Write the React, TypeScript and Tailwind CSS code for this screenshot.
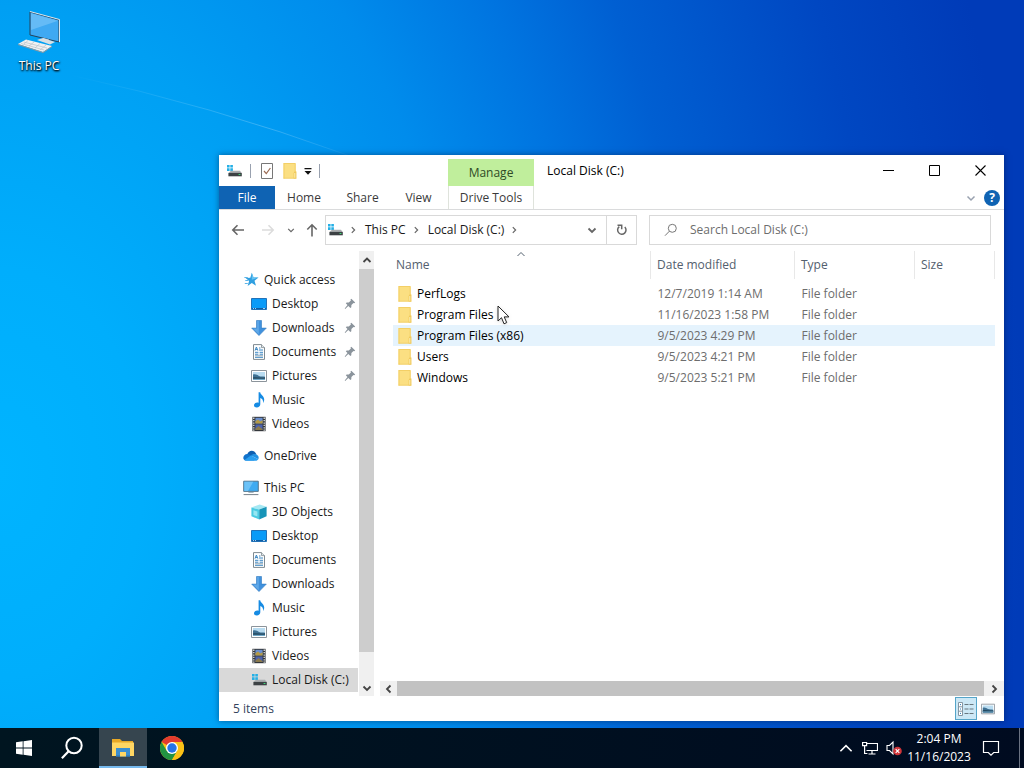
import type { ReactNode } from "react";

type IconProps = { className?: string };

const svgProps = { viewBox: "0 0 16 16", "aria-hidden": true } as const;

function DriveIcon({ className = "size-4" }: IconProps) {
  return (
    <svg {...svgProps} className={className}>
      <path d="M1 2h2.6v2.6H1zM4.3 2h2.6v2.6H4.3zM1 5.3h2.6v2.6H1zM4.3 5.3h2.6v2.6H4.3z" fill="#25b0e6" />
      <path d="M3.5 9 5 7.8h9L15.6 10H2.6z" fill="#a9adb0" />
      <path d="M2.4 9.9h13.4v3.4H2.4z" fill="#3c4144" />
      <path d="M12.6 11h1.8v1h-1.8z" fill="#3ddc78" />
    </svg>
  );
}

function FolderIcon({ className = "size-4" }: IconProps) {
  return (
    <svg {...svgProps} className={className}>
      <path d="M1.500 0h12v8.500h.8V15.500H1.500z" fill="#fbdf82" />
      <path d="M2 .5h11.200V9" fill="none" stroke="#f3cf66" />
      <path d="M2 0v15.500" fill="none" stroke="#f3cf66" />
      <path d="M1.500 14.800h12.800v.7H1.500z" fill="#efc85b" />
      <path d="M11.600 10 12.600 8.500h1.700v7h-2.700z" fill="#efc85b" />
      <path d="M12.300 10h1v4.800h-1z" fill="#fdeeb4" />
    </svg>
  );
}

function StarIcon({ className = "size-4" }: IconProps) {
  return (
    <svg {...svgProps} className={className}>
      <path d="m8.800.8 1.700 4.700 5 .1-4 3.100 1.500 5-4.200-2.800-4.200 3 1.500-5L2.600 6l4.700-.3z" fill="#2f9fe0" />
      <path d="m8.800.8 1.700 4.700 5 .1-6.700 2.200z" fill="#65c3f3" />
      <path d="M1.400 5.500h3.400M2.300 8.500h3M1.800 11.500h3" stroke="#5db4e8" strokeWidth="1" />
    </svg>
  );
}

function DesktopIcon({ className = "size-4" }: IconProps) {
  return (
    <svg {...svgProps} className={className}>
      <path d="M.5 2.500h15v11H.5z" fill="#0a9bf8" stroke="#2272b8" />
      <path d="M1 12.500h14" stroke="#0c5ca3" />
      <path d="M2 12.500h1M4 12.500h1M12 12.500h2" stroke="#d4ecff" strokeWidth=".8" />
    </svg>
  );
}

function DownloadIcon({ className = "size-4" }: IconProps) {
  return (
    <svg {...svgProps} className={className}>
      <path d="M5.5.5h5v7.6h4.8L8 15.6.7 8.1h4.8z" fill="#4091dd" stroke="#2f78c0" strokeWidth=".6" />
      <path d="M6.2 1h1.6v13.2L2.2 8.6h4z" fill="#60a9e9" />
    </svg>
  );
}

function DocumentIcon({ className = "size-4" }: IconProps) {
  return (
    <svg {...svgProps} className={className}>
      <path d="M2.5.6h8l3 3v11.8h-11z" fill="#fff" stroke="#7f8a91" />
      <path d="M10.5.6v3h3" fill="#dfe5e8" stroke="#7f8a91" strokeWidth=".8" />
      <path d="M4 6.6 5.4 3l1.4 3.6M4.5 5.4h1.8M8 4h1.5M8 6h4M4 8.3h3.4M8.6 8.3H12M4 10.2h3.4M8.6 10.2H12M4 13.3h8" stroke="#3b86c2" fill="none" />
      <path d="M4 11.8h8" stroke="#8ca3b2" />
    </svg>
  );
}

function PictureIcon({ className = "size-4" }: IconProps) {
  return (
    <svg {...svgProps} className={className}>
      <path d="M.5 2.5h15v11H.5z" fill="#fff" stroke="#8c949b" />
      <path d="M2 4h12v8H2z" fill="#b9dcf1" />
      <path d="M2 6.6c3-.8 4 .5 6 1.4s4 .2 6 .8V12H2z" fill="#3f7193" />
      <path d="M2 9.4c4-.9 8 .8 12 .2V12H2z" fill="#23485f" />
      <path d="M2 10.8h12V12H2z" fill="#6fa8c8" />
    </svg>
  );
}

function MusicIcon({ className = "size-4" }: IconProps) {
  return (
    <svg {...svgProps} className={className}>
      <path d="M7.6.3h1.6c.3 2.6 4 3.8 4 7.2 0 1.3-.5 2.5-1.2 3.4.4-2.6-.5-4-2.7-4.900v6.300c0 1.900-1.600 3.300-3.500 3.300-1.700 0-2.800-1-2.800-2.300 0-1.600 1.600-2.900 3.200-2.900.5 0 1 .1 1.400.3z" fill="#168be3" />
    </svg>
  );
}

function VideoIcon({ className = "size-4" }: IconProps) {
  return (
    <svg {...svgProps} className={className}>
      <path d="M1.4.8h13.2v14.4H1.4z" fill="#33373b" />
      <path d="M4.4 1.8h7.2v5.6H4.4z" fill="#6a8fd0" />
      <path d="M4.4 8.4h7.2V14H4.4z" fill="#4c62ad" />
      <path d="M4.4 5.3 7 3.4l2.3 2 2.3-1.2v3.2H4.4z" fill="#b59a45" />
      <path d="M4.4 12.6 7.6 10l4 3.2v.8H4.4z" fill="#8b7a4c" />
      <path d="M2.8 1.6v13.2M13.2 1.6v13.2" stroke="#f1f1f1" strokeWidth="1.2" strokeDasharray="1.3 1.1" />
    </svg>
  );
}

function CloudIcon({ className = "size-4" }: IconProps) {
  return (
    <svg {...svgProps} className={className}>
      <path d="M4.3 6.2C5 4 6.7 2.8 8.7 2.8c2.2 0 4 1.5 4.6 3.5L8 9z" fill="#0f5fb0" />
      <path d="M.3 10c0-2.2 1.7-4 4-4 1.4 0 2.4.7 3.6 1.4l3.6 5.2H3.3c-1.7 0-3-1.1-3-2.6z" fill="#1173cc" />
      <path d="M7.8 7.5c1.2-.9 2.4-1.5 3.8-1.4 2.3.1 4.1 1.7 4.1 3.6 0 .6-.2 1.1-.4 1.5z" fill="#2190e2" />
      <path d="m1.4 11.9 6.4-4.4 7.5 3.7c-.5.9-1.4 1.5-2.5 1.5H3.3c-.8 0-1.4-.3-1.9-.8z" fill="#2a9ff0" />
    </svg>
  );
}

function ComputerIcon({ className = "size-4" }: IconProps) {
  return (
    <svg {...svgProps} className={className}>
      <path d="M.7 1.2h14.6v10.2H.7z" fill="#3fabf2" stroke="#4f6d82" strokeWidth=".9" />
      <path d="M1.3 1.8h9L5 10.9H1.3z" fill="#6cc2f7" />
      <path d="M5.4 12h5.2v.9H5.4z" fill="#9fb0bb" />
      <path d="M.6 14.6h14.8" stroke="#75828b" strokeWidth="1" />
    </svg>
  );
}

function CubeIcon({ className = "size-4" }: IconProps) {
  return (
    <svg {...svgProps} className={className}>
      <path d="M.4 3.4 8.6.5l7 2.3-7.4 2.8z" fill="#a6e8f3" />
      <path d="M.4 3.4 8.2 5.6v10L.4 12.2z" fill="#4acbe2" />
      <path d="m8.2 5.6 7.4-2.8v9.4l-7.4 3.4z" fill="#1794b8" />
      <path d="m2.4 6.2 4 1.2v5.2l-4-1.6z" fill="#95e6f2" />
    </svg>
  );
}

function PinIcon() {
  return (
    <svg viewBox="0 0 12 12" aria-hidden className="size-3">
      <path d="M7.3.8 11.2 4.6 10.2 5.3 9.5 5 7.4 7.1 7.3 9.2 6.4 10 4.3 7.9 1.2 10.9.7 10.5 3.5 7.1 1.8 5.3 2.7 4.6 4.8 4.5 6.9 2.5 6.5 1.6z" fill="#8b949c" />
    </svg>
  );
}

type ChevronProps = IconProps & { dir: "up" | "down" | "left" | "right"; weight?: number };

const chevronPaths = {
  up: "M1.5 7 5 3.5 8.5 7",
  down: "M1.5 3.5 5 7l3.5-3.5",
  left: "M6.5 1.5 3 5l3.5 3.5",
  right: "M3.5 1.5 7 5 3.5 8.5",
};

function Chevron({ dir, weight = 1.5, className = "size-2.5" }: ChevronProps) {
  return (
    <svg viewBox="0 0 10 10" aria-hidden className={className}>
      <path d={chevronPaths[dir]} fill="none" stroke="currentColor" strokeWidth={weight} />
    </svg>
  );
}

function ArrowIcon({ path }: { path: string }) {
  return (
    <svg viewBox="0 0 14 14" aria-hidden className="size-3.5">
      <path d={path} fill="none" stroke="currentColor" strokeWidth="1.6" />
    </svg>
  );
}

type NavEntry = { label: string; icon: ReactNode; pinned?: boolean; selected?: boolean };
type NavGroup = { root: NavEntry; children: NavEntry[] };

const navGroups: NavGroup[] = [
  {
    root: { label: "Quick access", icon: <StarIcon /> },
    children: [
      { label: "Desktop", icon: <DesktopIcon />, pinned: true },
      { label: "Downloads", icon: <DownloadIcon />, pinned: true },
      { label: "Documents", icon: <DocumentIcon />, pinned: true },
      { label: "Pictures", icon: <PictureIcon />, pinned: true },
      { label: "Music", icon: <MusicIcon /> },
      { label: "Videos", icon: <VideoIcon /> },
    ],
  },
  { root: { label: "OneDrive", icon: <CloudIcon /> }, children: [] },
  {
    root: { label: "This PC", icon: <ComputerIcon /> },
    children: [
      { label: "3D Objects", icon: <CubeIcon /> },
      { label: "Desktop", icon: <DesktopIcon /> },
      { label: "Documents", icon: <DocumentIcon /> },
      { label: "Downloads", icon: <DownloadIcon /> },
      { label: "Music", icon: <MusicIcon /> },
      { label: "Pictures", icon: <PictureIcon /> },
      { label: "Videos", icon: <VideoIcon /> },
      { label: "Local Disk (C:)", icon: <DriveIcon />, selected: true },
    ],
  },
];

const files = [
  { name: "PerfLogs", modified: "12/7/2019 1:14 AM" },
  { name: "Program Files", modified: "11/16/2023 1:58 PM" },
  { name: "Program Files (x86)", modified: "9/5/2023 4:29 PM", hovered: true },
  { name: "Users", modified: "9/5/2023 4:21 PM" },
  { name: "Windows", modified: "9/5/2023 5:21 PM" },
];

function TitleBar() {
  return (
    <header className="flex h-[31px] shrink-0 pr-px">
      <div className="flex w-[229px] items-center pl-[7px]">
        <DriveIcon />
        <span className="ml-2 h-3.5 w-px bg-gray-400" />
        <button aria-label="Properties" className="ml-2">
          <svg viewBox="0 0 16 16" className="size-4">
            <path d="M2.500.5h11v15h-11z" fill="#fff" stroke="#777" />
            <path d="m5 8 2.300 2.600L11.400 5" fill="none" stroke="#9a6a52" strokeWidth="1.200" />
          </svg>
        </button>
        <button aria-label="New folder" className="ml-1.5">
          <FolderIcon className="h-4 w-[18px]" />
        </button>
        <button aria-label="Customize toolbar" className="ml-1">
          <svg viewBox="0 0 10 10" className="size-2.5">
            <path d="M1.500 2h7v1.200h-7zM1.500 5h7L5 8.800z" fill="#111" />
          </svg>
        </button>
        <span className="ml-1.5 h-3.5 w-px bg-gray-400" />
      </div>
      <div className="mt-1 flex w-[86px] items-center justify-center bg-[#c0ee9c] text-[#2f4a26]">Manage</div>
      <h1 className="flex flex-1 items-center pl-[13px] text-black">Local Disk (C:)</h1>
      <div className="flex text-black">
        <button aria-label="Minimize" className="flex w-[46px] items-center justify-center">
          <svg viewBox="0 0 11 11" className="size-[11px]">
            <path d="M0 5.500h11" stroke="currentColor" />
          </svg>
        </button>
        <button aria-label="Maximize" className="flex w-[46px] items-center justify-center">
          <svg viewBox="0 0 11 11" className="size-[11px]">
            <path d="M.5.5h10v10H.5z" fill="none" stroke="currentColor" />
          </svg>
        </button>
        <button aria-label="Close" className="flex w-[46px] items-center justify-center">
          <svg viewBox="0 0 11 11" className="size-[11px]">
            <path d="m.5.5 10 10m0-10-10 10" stroke="currentColor" strokeWidth="1.100" />
          </svg>
        </button>
      </div>
    </header>
  );
}

function Ribbon() {
  return (
    <div className="flex h-6 shrink-0 border-b border-[#dadbdc] text-[#3a3a3a]">
      <button className="w-14 bg-[#0f63b3] text-white">File</button>
      <button className="w-[58px]">Home</button>
      <button className="w-[59px]">Share</button>
      <button className="w-[53px]">View</button>
      <button className="ml-[3px] w-[86px] border-x border-[#dfe3dc]">Drive Tools</button>
      <div className="ml-auto flex items-center gap-2 pr-1">
        <button aria-label="Expand ribbon" className="text-gray-400">
          <Chevron dir="down" />
        </button>
        <button aria-label="Help" className="flex size-4 items-center justify-center rounded-full bg-[#0f63b3] text-xs font-bold text-white">
          ?
        </button>
      </div>
    </div>
  );
}

function AddressRow() {
  return (
    <div className="mb-px flex h-10 shrink-0 items-center pr-[13px]">
      <div className="flex w-[106px] items-center pl-3 text-[#666]">
        <button aria-label="Back">
          <ArrowIcon path="M13 7H2M6.500 2.300 1.800 7l4.700 4.700" />
        </button>
        <button aria-label="Forward" className="ml-4 text-[#dcdcdc]">
          <ArrowIcon path="M1 7h11M7.500 2.300 12.200 7l-4.700 4.700" />
        </button>
        <button aria-label="Recent locations" className="ml-3">
          <Chevron dir="down" className="size-2" />
        </button>
        <button aria-label="Up" className="ml-2.5">
          <ArrowIcon path="M7 13.500V2M2.300 6.500 7 1.800l4.700 4.700" />
        </button>
      </div>
      <div className="flex h-[30px] min-w-0 flex-[310] border border-[#d9d9d9]">
        <div className="flex min-w-0 flex-1 items-center text-[#1a1a1a]">
          <DriveIcon className="ml-px size-4" />
          <Chevron dir="right" className="ml-1.5 size-2 text-[#666]" />
          <a href="#this-pc" className="ml-2">This PC</a>
          <Chevron dir="right" className="ml-1.5 size-2 text-[#666]" />
          <a href="#local-disk" className="ml-2">Local Disk (C:)</a>
          <Chevron dir="right" className="ml-1.5 size-2 text-[#666]" />
          <button aria-label="Previous locations" className="mr-[9px] ml-auto text-[#666]">
            <Chevron dir="down" weight={1.8} />
          </button>
        </div>
        <button aria-label="Refresh" className="flex w-[30px] items-center justify-center border-l border-[#d9d9d9] text-[#666]">
          <svg viewBox="0 0 12 12" className="size-3">
            <path d="M3.300 2.600A4.200 4.200 0 1 0 8.800 3" fill="none" stroke="currentColor" strokeWidth="1.500" />
            <path d="M1.500 1.200h4.200v4" fill="none" stroke="currentColor" strokeWidth="1.500" />
          </svg>
        </button>
      </div>
      <label className="ml-3 flex h-[30px] min-w-0 flex-[326] items-center border border-[#d9d9d9] pl-3.5">
        <svg viewBox="0 0 14 14" aria-hidden className="size-3.5 shrink-0 text-[#777]">
          <circle cx="8.300" cy="5.300" r="4" fill="none" stroke="currentColor" />
          <path d="M5.400 8.200 1 12.700" stroke="currentColor" />
        </svg>
        <input
          type="search"
          aria-label="Search Local Disk (C:)"
          placeholder="Search Local Disk (C:)"
          className="ml-3 min-w-0 flex-1 outline-none placeholder:text-[#6d6d6d]"
        />
      </label>
    </div>
  );
}

function NavRow({ entry, nested }: { entry: NavEntry; nested?: boolean }) {
  return (
    <a
      href="#nav"
      className={`flex h-6 items-center gap-[5px] pr-0.5 ${nested ? "pl-8" : "pl-6"} ${entry.selected ? "bg-[#d9d9d9]" : ""}`}
    >
      {entry.icon}
      <span className="flex-1 whitespace-nowrap">{entry.label}</span>
      {entry.pinned && <PinIcon />}
    </a>
  );
}

function Sidebar() {
  return (
    <aside className="flex w-[155px] shrink-0">
      <nav className="flex min-w-0 flex-1 flex-col gap-2 pt-[17px] text-[#1a1a1a]">
        {navGroups.map((group) => (
          <div key={group.root.label}>
            <NavRow entry={group.root} />
            {group.children.map((entry) => (
              <NavRow key={entry.label} entry={entry} nested />
            ))}
          </div>
        ))}
      </nav>
      <div className="ml-px flex w-[15px] flex-col bg-[#f0f0f0] text-[#444]">
        <button aria-label="Scroll up" className="flex h-[18px] items-center justify-center">
          <Chevron dir="up" weight={1.8} />
        </button>
        <div className="mb-[27px] flex-1 bg-[#cdcdcd]" />
        <button aria-label="Scroll down" className="flex h-[17px] items-center justify-center">
          <Chevron dir="down" weight={1.8} />
        </button>
      </div>
    </aside>
  );
}

function FileTable() {
  return (
    <table className="w-full table-fixed text-left">
      <colgroup>
        <col />
        <col className="w-36" />
        <col className="w-[120px]" />
        <col className="w-20" />
      </colgroup>
      <thead>
        <tr className="h-7 text-[#53606e]">
          <th className="relative pl-[3px] font-normal">
            Name
            <Chevron dir="up" weight={1} className="absolute -top-0.5 left-1/2 -ml-1.5 size-2.5" />
          </th>
          <th className="border-l border-[#e8e8e8] pl-1.5 font-normal">Date modified</th>
          <th className="border-l border-[#e8e8e8] pl-1.5 font-normal">Type</th>
          <th className="border-x border-[#e8e8e8] pl-1.5 font-normal">Size</th>
        </tr>
      </thead>
      <tbody className="before:block before:h-1 before:content-['']">
        {files.map((file) => (
          <tr key={file.name} className={`h-[21px] ${file.hovered ? "bg-[#e5f3fd]" : ""}`}>
            <td className="text-black">
              <span className="flex items-center gap-1 pl-1">
                <FolderIcon />
                {file.name}
              </span>
            </td>
            <td className="pl-[7px] text-[#6d6d6d]">{file.modified}</td>
            <td className="pl-[7px] text-[#6d6d6d]">File folder</td>
            <td />
          </tr>
        ))}
      </tbody>
    </table>
  );
}

function ExplorerWindow() {
  return (
    <main className="absolute top-[155px] right-5 bottom-[7px] left-[219px] flex flex-col overflow-hidden bg-white shadow-[0_0_6px_rgba(0,20,60,0.5)]">
      <TitleBar />
      <Ribbon />
      <AddressRow />
      <div className="flex min-h-0 flex-1">
        <Sidebar />
        <section className="flex min-w-0 flex-1 flex-col pl-1.5">
          <div className="flex-1 pr-[9px] pl-[13px]">
            <FileTable />
          </div>
          <div className="flex h-[15px] bg-[#f0f0f0] text-[#444]">
            <button aria-label="Scroll left" className="flex w-[17px] items-center justify-center">
              <Chevron dir="left" weight={1.8} />
            </button>
            <div className="flex-1 bg-[#c2c2c2]" />
            <button aria-label="Scroll right" className="flex w-5 items-center justify-center">
              <Chevron dir="right" weight={1.8} />
            </button>
          </div>
        </section>
      </div>
      <footer className="flex h-[25px] shrink-0 items-center pr-[9px] pl-3.5 text-[#33435c]">
        <span className="flex-1">5 items</span>
        <button aria-label="Details view" className="flex h-[23px] w-[22px] items-center justify-center border border-[#55a5c9] bg-[#cce8f6]">
          <svg viewBox="0 0 16 14" className="h-3.5 w-4">
            <path d="M.5.500h4v13h-4zM.5 4.800h4M.5 9.200h4" fill="#fff" stroke="#8496a3" />
            <path d="M2 2.600h1M2 7h1M2 11.400h1" stroke="#2779b5" />
            <path d="M6.500 2.500h4M11.500 2.500h4M6.500 7h4M11.500 7h4M6.500 11.500h4M11.500 11.500h4" stroke="#68777f" />
          </svg>
        </button>
        <button aria-label="Large icons view" className="ml-1">
          <PictureIcon className="size-3.5" />
        </button>
      </footer>
    </main>
  );
}

function DesktopShortcut() {
  return (
    <a href="#this-pc" className="absolute top-2.5 left-0 flex w-[78px] flex-col items-center gap-0.5 text-white">
      <svg viewBox="0 0 48 46" aria-hidden className="h-[46px] w-12">
        <path d="m15 2 29 8v22l-29-7z" fill="#3fa9f2" stroke="#27425a" strokeWidth="1" />
        <path d="m16 3.300 27 7.400L16 20z" fill="#7fc8f8" opacity=".6" />
        <path d="m15 1.500 29.500 8V32" fill="none" stroke="#dbe7ee" strokeWidth="1" />
        <path d="m28 28 6 1.500v3l-6-1z" fill="#b7c4cc" />
        <path d="m22 30 6-2 12 4-5 2.500z" fill="#d9e0e4" />
        <path d="m3 34 8-4.500L37 36l-9 6z" fill="#f1f1f1" />
        <path d="m3 34 25 8 9-6v1l-9 6L3 35z" fill="#8f999f" />
        <path d="m6 33.500 23 6.500M8.500 32 32 38M13 30.500 9 34M19 32l-5 4M25 33.500 20 38M31 35l-6 5" stroke="#b9c2c8" strokeWidth=".7" />
      </svg>
      <span className="[text-shadow:0_1px_2px_black,1px_1px_2px_black]">This PC</span>
    </a>
  );
}

function LightRay() {
  return (
    <svg viewBox="0 0 360 160" aria-hidden className="pointer-events-none absolute top-0 left-0 h-40 w-90">
      <defs>
        <linearGradient id="ray" x1="0" x2="1">
          <stop offset="0" stopColor="#fff" stopOpacity="0" />
          <stop offset=".7" stopColor="#fff" stopOpacity=".22" />
          <stop offset="1" stopColor="#fff" stopOpacity=".05" />
        </linearGradient>
      </defs>
      <path d="M70 75 Q210 105 350 156" fill="none" stroke="url(#ray)" />
    </svg>
  );
}

function Pointer() {
  return (
    <svg viewBox="0 0 14 21" aria-hidden className="pointer-events-none absolute top-[305px] left-[497px] h-[21px] w-3.5 drop-shadow">
      <path d="M1 1v15l3.500-3.300L7 18.800l2.700-1.200-2.500-5.700h4.800z" fill="#fff" stroke="#222" />
    </svg>
  );
}

function Taskbar() {
  return (
    <footer className="flex h-10 shrink-0 bg-gradient-to-r from-[#001520] to-[#000b20] text-white">
      <button aria-label="Start" className="flex w-12 items-center justify-center">
        <svg viewBox="0 0 16 16" className="size-4">
          <path d="m0 2.300 6.700-1v6.300H0zM7.500 1.200 16 0v7.600H7.500zM0 8.400h6.700v6.300L0 13.700zM7.500 8.400H16V16l-8.500-1.200z" fill="currentColor" />
        </svg>
      </button>
      <button aria-label="Search" className="flex w-[51px] items-center justify-center pr-[3px]">
        <svg viewBox="0 0 24 24" className="size-6">
          <circle cx="14" cy="9.500" r="7.700" fill="none" stroke="currentColor" strokeWidth="2" />
          <path d="m8.600 15.200-6.700 7" stroke="currentColor" strokeWidth="2.200" />
        </svg>
      </button>
      <button aria-label="File Explorer" className="flex w-12 items-center justify-center border-b-2 border-[#76b9ed] bg-[#36454f] pt-0.5">
        <svg viewBox="0 0 22 20" className="h-5 w-[22px]">
          <path d="M0 1h8l2 2h11v4H0z" fill="#e8a826" />
          <path d="M0 4.500h22V18H0z" fill="#ffd663" />
          <path d="M4 10h14v8.500H4z" fill="#3b8ed0" />
          <path d="M8 14h6v4.500H8z" fill="#ffd663" />
          <path d="M4 17.500h4v1H4zM14 17.500h4v1h-4z" fill="#2b75b4" />
        </svg>
      </button>
      <button aria-label="Chrome" className="flex w-[50px] items-center justify-center">
        <svg viewBox="0 0 24 24" className="size-6">
          <circle cx="12" cy="12" r="12" fill="#fbc116" />
          <path d="M12 12 1.600 6A12 12 0 0 1 22.400 6H12z" fill="#e33b2e" />
          <path d="M1.600 6A12 12 0 0 0 12 24l5.200-9L12 12 6.800 15z" fill="#229342" />
          <path d="M22.400 6A12 12 0 0 1 12 24l5.200-9L14 6z" fill="#fbc116" />
          <circle cx="12" cy="12" r="6" fill="#fff" />
          <circle cx="12" cy="12" r="4.700" fill="#2674e8" />
        </svg>
      </button>
      <div className="ml-auto flex items-center">
        <button aria-label="Show hidden icons">
          <Chevron dir="up" weight={1} className="size-4" />
        </button>
        <button aria-label="Network" className="ml-2">
          <svg viewBox="0 0 16 16" className="size-4">
            <path d="M4.500 3.500h11v7h-11M10 10.500v3.500M6.500 14h7" fill="none" stroke="currentColor" strokeWidth="1.200" />
            <path d="M.6 2.500h4v3.200h-4zM2.600 5.700v7.800h2.800" fill="none" stroke="currentColor" strokeWidth="1.200" />
          </svg>
        </button>
        <button aria-label="Volume" className="ml-2">
          <svg viewBox="0 0 18 16" className="h-4 w-[18px]">
            <path d="M1 5.500h2.500L7 2v12l-3.500-3.500H1z" fill="none" stroke="currentColor" strokeWidth="1.100" />
            <circle cx="11.500" cy="11" r="4.300" fill="#d13438" />
            <path d="m9.700 9.200 3.600 3.600m0-3.600-3.600 3.600" stroke="#fff" strokeWidth="1.200" />
          </svg>
        </button>
        <time className="flex w-[70px] flex-col text-center leading-[18px]" dateTime="2023-11-16T14:04">
          <span>2:04 PM</span>
          <span>11/16/2023</span>
        </time>
        <button aria-label="Notifications" className="ml-2">
          <svg viewBox="0 0 18 18" className="size-[18px]">
            <path d="M1.500 2.500h15v11h-4.800L9 16.200l-2.700-2.700H1.500z" fill="none" stroke="currentColor" strokeWidth="1.200" />
          </svg>
        </button>
        <span className="ml-[19px] h-10 w-[5px] border-l border-gray-500" />
      </div>
    </footer>
  );
}

export default function App() {
  return (
    <div className="flex h-screen flex-col overflow-hidden font-['Open_Sans','Noto_Sans',sans-serif] text-xs">
      <div className="relative min-h-0 flex-1 bg-[radial-gradient(100%_200%_at_0%_65%,#00b4ff_0%,#00aefc_14%,#009ff3_32%,#008cec_46%,#0074e0_58%,#005fd2_68%,#0047c2_86%,#003bb8_100%)]">
        <LightRay />
        <DesktopShortcut />
        <ExplorerWindow />
        <Pointer />
      </div>
      <Taskbar />
    </div>
  );
}
